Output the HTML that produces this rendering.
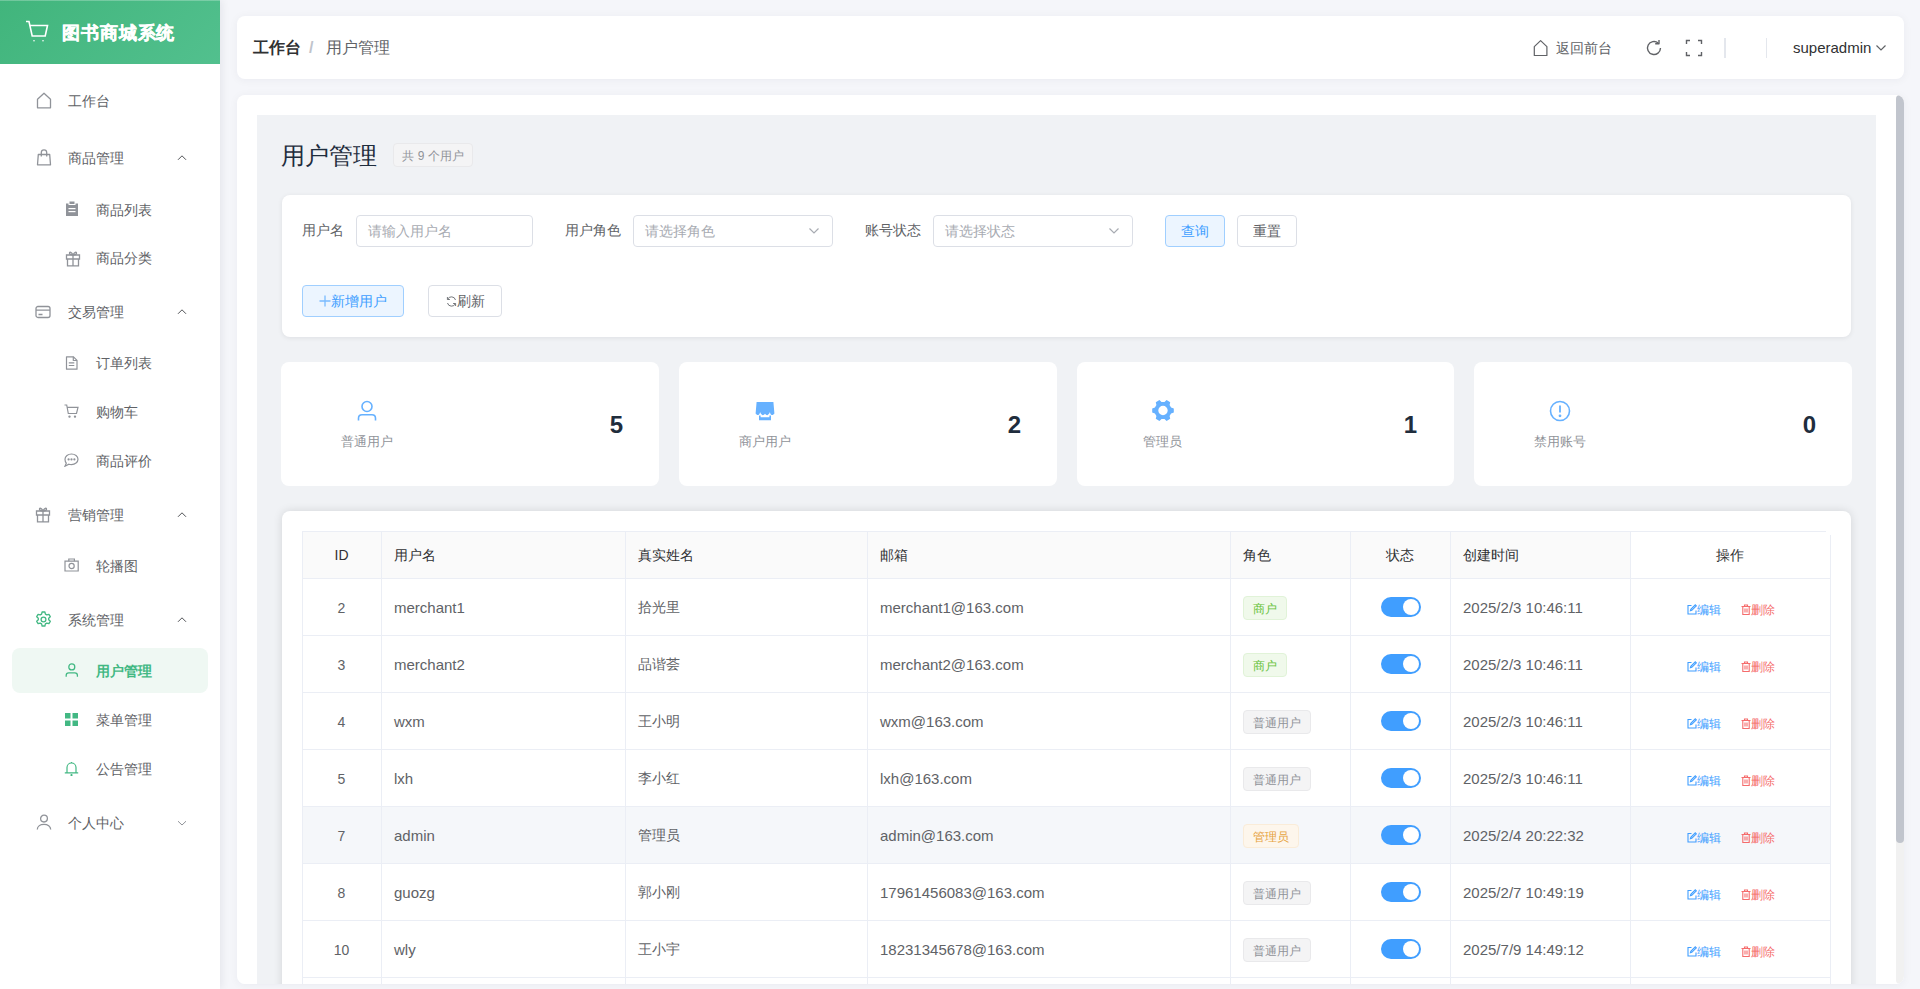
<!DOCTYPE html>
<html><head><meta charset="utf-8">
<style>
*{box-sizing:border-box;margin:0;padding:0}
html,body{width:1920px;height:989px;overflow:hidden}
body{font-family:"Liberation Sans",sans-serif;background:#f5f6fa;position:relative;color:#303133;font-size:14px}
.abs{position:absolute}
#side{position:absolute;left:0;top:0;width:220px;height:989px;background:#fff;box-shadow:2px 0 8px rgba(0,21,41,.07);z-index:2}
#logo{position:absolute;left:0;top:0;width:220px;height:64px;background:linear-gradient(135deg,#41b57c,#52c08e)}
#logo .t{position:absolute;left:62px;top:19.5px;font-size:18px;letter-spacing:.9px;font-weight:bold;color:#fff;line-height:26px;-webkit-text-stroke:.4px #fff}
.mt{font-size:14px;line-height:20px;white-space:nowrap}
#hdr{position:absolute;left:237px;top:16px;width:1667px;height:63px;background:#fff;border-radius:8px;box-shadow:0 1px 10px rgba(0,20,60,.05)}
#layer{position:absolute;left:0;top:0;width:1920px;height:989px;clip-path:inset(95px 16px 5px 237px round 8px)}
.card{position:absolute;background:#fff;border-radius:8px}
.lbl{position:absolute;font-size:14px;line-height:20px;color:#606266;white-space:nowrap}
.inp{position:absolute;height:32px;border:1px solid #dcdfe6;border-radius:4px;background:#fff}
.ph{position:absolute;left:11px;top:5px;font-size:14px;line-height:20px;color:#a8abb2;white-space:nowrap}
.btn{position:absolute;height:32px;border:1px solid #dcdfe6;border-radius:4px;background:#fff;font-size:14px;line-height:30px;text-align:center;color:#606266;white-space:nowrap}
.th{font-size:14px;line-height:20px;color:#303133;font-weight:500;white-space:nowrap}
.td{font-size:14px;line-height:20px;color:#606266;white-space:nowrap}
.td.l{font-size:15px;margin-top:1px}
.tag{height:24px;padding:0 9px;border:1px solid;border-radius:4px;font-size:12px;line-height:24px;white-space:nowrap}
.sw{width:40px;height:20px;border-radius:10px;background:#409eff}
.sw i{position:absolute;right:2px;top:2px;width:16px;height:16px;border-radius:50%;background:#fff}
.op{font-size:12px;line-height:14px;white-space:nowrap}
.op svg{vertical-align:-1px}
.stl{position:absolute;font-size:13px;line-height:18px;color:#909399;white-space:nowrap;width:100px;text-align:center}
.stn{position:absolute;font-size:24px;font-weight:bold;line-height:28px;color:#1f2d3d;text-align:right;width:60px;margin-top:1px}
</style></head><body>
<div id="side">
  <div id="logo"><div class="abs" style="left:0;top:0;width:220px;height:1px;background:rgba(255,255,255,.25)"></div>
    <svg class="abs" style="left:25px;top:20px" width="24" height="23" viewBox="0 0 24 23" fill="none" stroke="#fff" stroke-width="1.6"><path d="M1 1.5h3l3.2 14.5h13l2.3-10.5H5.5"/><circle cx="9" cy="20.8" r=".8" fill="#fff" stroke="none"/><circle cx="18" cy="20.8" r=".8" fill="#fff" stroke="none"/></svg>
    <div class="t">图书商城系统</div>
  </div>
<div class="abs" style="left:12px;top:648px;width:196px;height:45px;border-radius:8px;background:#eff8f3"></div>
<div class="abs" style="left:36px;top:92px"><svg width="16" height="17" viewBox="0 0 16 17" fill="none" stroke="#909399" stroke-width="1.3" stroke-linejoin="round"><path d="M1.5 7.2L8 1.2l6.5 6V15.8H1.5z"/></svg></div>
<div class="abs mt" style="left:68px;top:91px;color:#606266;">工作台</div>
<div class="abs" style="left:36px;top:149px"><svg width="16" height="17" viewBox="0 0 16 17" fill="none" stroke="#909399" stroke-width="1.3" stroke-linejoin="round"><path d="M2.3 5.5h11.4l.8 10.3H1.5z"/><path d="M5.3 7.5V3.6a2.7 2.7 0 0 1 5.4 0V7.5"/></svg></div>
<div class="abs mt" style="left:68px;top:148px;color:#606266;">商品管理</div>
<svg class="abs" style="left:176px;top:154px" width="12" height="8" viewBox="0 0 12 8" fill="none" stroke="#505256" stroke-width="1"><path d="M2 5.8L6 1.8 10 5.8"/></svg>
<div class="abs" style="left:65px;top:201px"><svg width="14" height="15" viewBox="0 0 14 15"><path fill="#909399" d="M1 2.5h2.5V4h7V2.5H13V15H1z"/><rect x="4.5" y="0.5" width="5" height="2.5" fill="#909399"/><rect x="3.5" y="7" width="7" height="1.2" fill="#fff"/><rect x="3.5" y="10" width="7" height="1.2" fill="#fff"/></svg></div>
<div class="abs mt" style="left:96px;top:199.5px;color:#606266;">商品列表</div>
<div class="abs" style="left:65px;top:250px"><svg width="16" height="17" viewBox="0 0 16 17" fill="none" stroke="#909399" stroke-width="1.3"><path d="M1.5 5h13v4h-13zM2.5 9h11v6.8h-11zM8 5v10.8"/><path d="M8 5C6.5 2 4.5 1.5 4.5 3.2S6.5 5 8 5c1.5 0 3.5 0 3.5-1.8S9.5 2 8 5z"/></svg></div>
<div class="abs mt" style="left:96px;top:248px;color:#606266;">商品分类</div>
<div class="abs" style="left:35px;top:305px"><svg width="16" height="14" viewBox="0 0 16 14" fill="none" stroke="#909399" stroke-width="1.3"><rect x="1" y="1.5" width="14" height="11" rx="2"/><path d="M1 5.2h14M3.5 9.5h4"/></svg></div>
<div class="abs mt" style="left:68px;top:302px;color:#606266;">交易管理</div>
<svg class="abs" style="left:176px;top:308px" width="12" height="8" viewBox="0 0 12 8" fill="none" stroke="#505256" stroke-width="1"><path d="M2 5.8L6 1.8 10 5.8"/></svg>
<div class="abs" style="left:65px;top:356px"><svg width="14" height="14" viewBox="0 0 14 14" fill="none" stroke="#909399" stroke-width="1.2" stroke-linejoin="round"><path d="M1.5 0.8h7l3.5 3.5V13.2h-10.5z"/><path d="M8.3 0.8v3.7H12M3.8 6.8h5.5M3.8 9.5h5.5"/></svg></div>
<div class="abs mt" style="left:96px;top:353px;color:#606266;">订单列表</div>
<div class="abs" style="left:64px;top:404px"><svg width="15" height="14" viewBox="0 0 15 14" fill="none" stroke="#909399" stroke-width="1.2"><path d="M0.5 1h2.2l1.6 8.5h8.2l1.5-6.2H3.2"/><circle cx="5.5" cy="12.6" r=".6" fill="#909399"/><circle cx="11" cy="12.6" r=".6" fill="#909399"/></svg></div>
<div class="abs mt" style="left:96px;top:402px;color:#606266;">购物车</div>
<div class="abs" style="left:64px;top:453px"><svg width="15" height="14" viewBox="0 0 15 14" fill="none" stroke="#909399" stroke-width="1.2"><path d="M7.5 1C11 1 14 3.3 14 6.3S11 11.6 7.5 11.6c-.9 0-1.8-.1-2.6-.4L1 13.2l1.3-3C1.5 9.2 1 7.8 1 6.3 1 3.3 4 1 7.5 1z"/><circle cx="4.6" cy="6.4" r=".5" fill="#909399"/><circle cx="7.5" cy="6.4" r=".5" fill="#909399"/><circle cx="10.4" cy="6.4" r=".5" fill="#909399"/></svg></div>
<div class="abs mt" style="left:96px;top:451px;color:#606266;">商品评价</div>
<div class="abs" style="left:35px;top:506px"><svg width="16" height="17" viewBox="0 0 16 17" fill="none" stroke="#909399" stroke-width="1.3"><path d="M1.5 5h13v4h-13zM2.5 9h11v6.8h-11zM8 5v10.8"/><path d="M8 5C6.5 2 4.5 1.5 4.5 3.2S6.5 5 8 5c1.5 0 3.5 0 3.5-1.8S9.5 2 8 5z"/></svg></div>
<div class="abs mt" style="left:68px;top:505px;color:#606266;">营销管理</div>
<svg class="abs" style="left:176px;top:511px" width="12" height="8" viewBox="0 0 12 8" fill="none" stroke="#505256" stroke-width="1"><path d="M2 5.8L6 1.8 10 5.8"/></svg>
<div class="abs" style="left:64px;top:558px"><svg width="15" height="14" viewBox="0 0 15 14" fill="none" stroke="#909399" stroke-width="1.2"><path d="M1 3.2h13.2v9.8H1z"/><path d="M4.8 3.2V1h5.6v2.2"/><circle cx="7.6" cy="8" r="2.6"/></svg></div>
<div class="abs mt" style="left:96px;top:556px;color:#606266;">轮播图</div>
<div class="abs" style="left:35px;top:611px"><svg width="17" height="17" viewBox="0 0 17 17" fill="none" stroke="#42b883" stroke-width="1.3" stroke-linejoin="round"><path d="M7.1 1h2.8l.5 2.1 1.4.8 2.1-.6 1.4 2.4-1.6 1.5v1.6l1.6 1.5-1.4 2.4-2.1-.6-1.4.8-.5 2.1H7.1l-.5-2.1-1.4-.8-2.1.6-1.4-2.4 1.6-1.5V7.2L1.7 5.7l1.4-2.4 2.1.6 1.4-.8z"/><circle cx="8.5" cy="8.5" r="2.4"/></svg></div>
<div class="abs mt" style="left:68px;top:610px;color:#606266;">系统管理</div>
<svg class="abs" style="left:176px;top:616px" width="12" height="8" viewBox="0 0 12 8" fill="none" stroke="#505256" stroke-width="1"><path d="M2 5.8L6 1.8 10 5.8"/></svg>
<div class="abs" style="left:65px;top:663px"><svg width="13.6" height="14.5" viewBox="0 0 15 16" fill="none" stroke="#42b883" stroke-width="1.4"><circle cx="7.5" cy="4.3" r="3.3"/><path d="M1.3 15.2v-1.4c0-1.6 1.2-2.8 2.8-2.8h6.8c1.6 0 2.8 1.2 2.8 2.8v1.4"/></svg></div>
<div class="abs mt" style="left:96px;top:661px;color:#42b883;font-weight:bold;">用户管理</div>
<div class="abs" style="left:65px;top:713px"><svg width="13" height="13" viewBox="0 0 13 13" fill="#42b883"><rect x="0" y="0" width="5.5" height="5.5"/><rect x="7.5" y="0" width="5.5" height="5.5"/><rect x="0" y="7.5" width="5.5" height="5.5"/><rect x="7.5" y="7.5" width="5.5" height="5.5"/></svg></div>
<div class="abs mt" style="left:96px;top:710px;color:#606266;">菜单管理</div>
<div class="abs" style="left:64px;top:761px"><svg width="15" height="15" viewBox="0 0 15 15" fill="none" stroke="#42b883" stroke-width="1.2"><path d="M3 11.5V6.5a4.5 4.5 0 0 1 9 0v5M0.8 11.8h13.4"/><path d="M7.5 1v1"/><circle cx="7.5" cy="14" r=".5" fill="#42b883"/></svg></div>
<div class="abs mt" style="left:96px;top:759px;color:#606266;">公告管理</div>
<div class="abs" style="left:36px;top:814px"><svg width="16" height="16" viewBox="0 0 16 16" fill="none" stroke="#909399" stroke-width="1.3"><circle cx="8" cy="4.6" r="3.4"/><path d="M1.3 15.5c0-3.3 3-5.2 6.7-5.2s6.7 1.9 6.7 5.2"/></svg></div>
<div class="abs mt" style="left:68px;top:813px;color:#606266;">个人中心</div>
<svg class="abs" style="left:176px;top:819px" width="12" height="8" viewBox="0 0 12 8" fill="none" stroke="#909399" stroke-width="1"><path d="M2 2.2L6 6 10 2.2"/></svg>
</div>
<div id="hdr">
  <div class="abs" style="left:16px;top:22px;font-size:16px;font-weight:bold;color:#303133;line-height:20px">工作台</div>
  <div class="abs" style="left:72px;top:22px;font-size:16px;font-weight:bold;color:#c0c4cc;line-height:20px">/</div>
  <div class="abs" style="left:89px;top:22px;font-size:16px;color:#606266;line-height:20px">用户管理</div>
  <svg class="abs" style="left:1295px;top:23px" width="17" height="18" viewBox="0 0 17 18" fill="none" stroke="#606266" stroke-width="1.2" stroke-linejoin="round"><path d="M2.3 7.6L8.6 1.6l6.3 6V16.5H2.3z"/></svg>
  <div class="abs" style="left:1319px;top:22px;font-size:14px;line-height:20px;color:#606266">返回前台</div>
  <svg class="abs" style="left:1408px;top:23px" width="18" height="18" viewBox="0 0 18 18" fill="none" stroke="#606266" stroke-width="1.4"><path d="M15.5 9A6.5 6.5 0 1 1 13.2 4"/><path d="M14 1v3.8h-3.8" stroke-linejoin="round"/></svg>
  <svg class="abs" style="left:1448px;top:23px" width="18" height="18" viewBox="0 0 18 18" fill="none" stroke="#606266" stroke-width="1.4"><path d="M1.5 5V1.5H5M13 1.5h3.5V5M16.5 13v3.5H13M5 16.5H1.5V13"/></svg>
  <div class="abs" style="left:1487px;top:22px;width:2px;height:20px;background:#e4e7ed"></div>
  <div class="abs" style="left:1529px;top:22px;width:1px;height:20px;background:#e4e7ed"></div>
  <div class="abs" style="left:1556px;top:22px;font-size:15px;line-height:20px;color:#303133">superadmin</div>
  <svg class="abs" style="left:1638px;top:28px" width="12" height="8" viewBox="0 0 12 8" fill="none" stroke="#606266" stroke-width="1.2"><path d="M1.5 1.5L6 6l4.5-4.5"/></svg>
</div>
<div class="abs" style="left:237px;top:95px;width:1667px;height:889px;border-radius:8px;box-shadow:0 1px 10px rgba(0,20,60,.05)"></div>
<div id="layer">
  <div class="abs" style="left:237px;top:95px;width:1667px;height:894px;background:#fff"></div>
  <div class="abs" style="left:257px;top:115px;width:1619px;height:880px;background:#f0f2f5"></div>
  <div class="abs" style="left:1896px;top:95px;width:8px;height:889px;background:#f1f1f1;border-radius:4px"></div>
  <div class="abs" style="left:1896px;top:95px;width:8px;height:748px;background:#c1c5cd;border-radius:4px"></div>
  <div class="abs" style="left:281px;top:138px;font-size:24px;line-height:36px;color:#1f2d3d">用户管理</div>
  <div class="abs" style="left:393px;top:143px;width:80px;height:24px;border:1px solid #e9e9eb;background:#f4f4f5;border-radius:4px;font-size:12px;line-height:25px;color:#909399;text-align:center">共 9 个用户</div>
  <div class="card" style="left:282px;top:195px;width:1569px;height:142px;box-shadow:0 1px 5px rgba(0,10,30,.08)">
    <div class="lbl" style="left:20px;top:25px">用户名</div>
    <div class="inp" style="left:74px;top:20px;width:177px"><div class="ph">请输入用户名</div></div>
    <div class="lbl" style="left:283px;top:25px">用户角色</div>
    <div class="inp" style="left:351px;top:20px;width:200px"><div class="ph">请选择角色</div>
      <svg class="abs" style="left:174px;top:11px" width="12" height="8" viewBox="0 0 12 8" fill="none" stroke="#a8abb2" stroke-width="1.2"><path d="M1.5 1.5L6 6l4.5-4.5"/></svg></div>
    <div class="lbl" style="left:583px;top:25px">账号状态</div>
    <div class="inp" style="left:651px;top:20px;width:200px"><div class="ph">请选择状态</div>
      <svg class="abs" style="left:174px;top:11px" width="12" height="8" viewBox="0 0 12 8" fill="none" stroke="#a8abb2" stroke-width="1.2"><path d="M1.5 1.5L6 6l4.5-4.5"/></svg></div>
    <div class="btn" style="left:883px;top:20px;width:60px;background:#ecf5ff;border-color:#a0cfff;color:#409eff">查询</div>
    <div class="btn" style="left:955px;top:20px;width:60px">重置</div>
    <div class="btn" style="left:20px;top:90px;width:102px;background:#ecf5ff;border-color:#a0cfff;color:#409eff">
      <svg style="vertical-align:-1px" width="12" height="12" viewBox="0 0 12 12" stroke="#79bbff" stroke-width="1.3"><path d="M6 0.5v11M0.5 6h11"/></svg>新增用户</div>
    <div class="btn" style="left:146px;top:90px;width:74px">
      <svg style="vertical-align:-1px" width="11" height="11" viewBox="0 0 11 11" fill="none" stroke="#73767a" stroke-width="1"><path d="M9.5 4A4.2 4.2 0 0 0 1.6 3.3M1.5 7a4.2 4.2 0 0 0 7.9.7"/><path d="M1.4 1v2.5h2.5M9.6 10V7.5H7.1"/></svg>刷新</div>
  </div>
  <div class="card" style="left:281px;top:362px;width:378px;height:124px"></div>
  <div class="card" style="left:679px;top:362px;width:378px;height:124px"></div>
  <div class="card" style="left:1077px;top:362px;width:377px;height:124px"></div>
  <div class="card" style="left:1474px;top:362px;width:378px;height:124px"></div>
  <svg class="abs" style="left:357px;top:400px" width="20" height="22" viewBox="0 0 20 22" fill="none" stroke="#66b1ff" stroke-width="1.6"><circle cx="10" cy="6.5" r="5"/><path d="M1.5 20.5v-2.2c0-2 1.5-3.5 3.5-3.5h10c2 0 3.5 1.5 3.5 3.5v2.2"/></svg>
  <div class="stl" style="left:316.5px;top:433px">普通用户</div>
  <div class="stn" style="left:563px;top:410px">5</div>
  <svg class="abs" style="left:755px;top:401px" width="20" height="20" viewBox="0 0 20 20" fill="#66b1ff"><path d="M1.6 0.9h16.8l1 11.6c-.4.9-1.4 1.5-2.6 1.6-.9-.3-1.5-1-1.9-3-.5 1.8-1.6 2.8-2.7 3.1-.9-.2-1.6-.8-2.2-1.5-.6.7-1.3 1.3-2.2 1.5-1.1-.3-2.2-1.3-2.7-3.1-.4 2-1 2.7-1.9 3-1.2-.1-2.2-.7-2.6-1.6z"/><path d="M4 14.4h1.6v1.8h8.8v-1.8H16v4.9H4z"/></svg>
  <div class="stl" style="left:714.5px;top:433px">商户用户</div>
  <div class="stn" style="left:961px;top:410px">2</div>
  <svg class="abs" style="left:1152px;top:400px" width="22" height="21" viewBox="0 0 22 21" fill="#66b1ff"><path fill-rule="evenodd" d="M19.08 7.56 L21.80 8.40 L21.80 12.60 L19.08 13.44 L17.59 16.03 L18.22 18.80 L14.58 20.90 L12.49 18.97 L9.51 18.97 L7.42 20.90 L3.78 18.80 L4.41 16.03 L2.92 13.44 L0.20 12.60 L0.20 8.40 L2.92 7.56 L4.41 4.97 L3.78 2.20 L7.42 0.10 L9.51 2.03 L12.49 2.03 L14.58 0.10 L18.22 2.20 L17.59 4.97ZM15.7 10.5a4.7 4.7 0 1 0 -9.4 0a4.7 4.7 0 1 0 9.4 0z"/></svg>
  <div class="stl" style="left:1112.5px;top:433px">管理员</div>
  <div class="stn" style="left:1357px;top:410px">1</div>
  <svg class="abs" style="left:1549px;top:400px" width="22" height="22" viewBox="0 0 22 22" fill="none" stroke="#66b1ff" stroke-width="1.6"><circle cx="11" cy="11" r="9.5"/><path d="M11 5.5v7" stroke-width="1.8"/><circle cx="11" cy="15.8" r=".6" fill="#66b1ff"/></svg>
  <div class="stl" style="left:1510px;top:433px">禁用账号</div>
  <div class="stn" style="left:1756px;top:410px">0</div>
  <div class="card" style="left:282px;top:511px;width:1569px;height:600px;box-shadow:0 0 10px rgba(0,0,0,.12)"></div>
<div class="abs" style="left:302px;top:531px;width:1528px;height:47px;background:#fafafa"></div>
<div class="abs" style="left:1630px;top:531px;width:200px;height:47px;background:#fff"></div>
<div class="abs" style="left:302px;top:806px;width:1528px;height:57px;background:#f5f7fa"></div>
<div class="abs" style="left:302px;top:531px;width:1524px;height:1px;background:#ebeef5"></div>
<div class="abs" style="left:302px;top:578px;width:1528px;height:1px;background:#ebeef5"></div>
<div class="abs" style="left:302px;top:635px;width:1528px;height:1px;background:#ebeef5"></div>
<div class="abs" style="left:302px;top:692px;width:1528px;height:1px;background:#ebeef5"></div>
<div class="abs" style="left:302px;top:749px;width:1528px;height:1px;background:#ebeef5"></div>
<div class="abs" style="left:302px;top:806px;width:1528px;height:1px;background:#ebeef5"></div>
<div class="abs" style="left:302px;top:863px;width:1528px;height:1px;background:#ebeef5"></div>
<div class="abs" style="left:302px;top:920px;width:1528px;height:1px;background:#ebeef5"></div>
<div class="abs" style="left:302px;top:977px;width:1528px;height:1px;background:#ebeef5"></div>
<div class="abs" style="left:302px;top:1034px;width:1528px;height:1px;background:#ebeef5"></div>
<div class="abs" style="left:302px;top:531px;width:1px;height:458px;background:#ebeef5"></div>
<div class="abs" style="left:381px;top:531px;width:1px;height:458px;background:#ebeef5"></div>
<div class="abs" style="left:625px;top:531px;width:1px;height:458px;background:#ebeef5"></div>
<div class="abs" style="left:867px;top:531px;width:1px;height:458px;background:#ebeef5"></div>
<div class="abs" style="left:1230px;top:531px;width:1px;height:458px;background:#ebeef5"></div>
<div class="abs" style="left:1350px;top:531px;width:1px;height:458px;background:#ebeef5"></div>
<div class="abs" style="left:1450px;top:531px;width:1px;height:458px;background:#ebeef5"></div>
<div class="abs" style="left:1630px;top:531px;width:1px;height:458px;background:#ebeef5"></div>
<div class="abs" style="left:1830px;top:535px;width:1px;height:454px;background:#ebeef5"></div>
<div class="abs th" style="left:291.5px;width:100px;text-align:center;top:544.5px">ID</div>
<div class="abs th" style="left:394px;top:544.5px">用户名</div>
<div class="abs th" style="left:638px;top:544.5px">真实姓名</div>
<div class="abs th" style="left:880px;top:544.5px">邮箱</div>
<div class="abs th" style="left:1243px;top:544.5px">角色</div>
<div class="abs th" style="left:1350px;width:100px;text-align:center;top:544.5px">状态</div>
<div class="abs th" style="left:1463px;top:544.5px">创建时间</div>
<div class="abs th" style="left:1680px;width:100px;text-align:center;top:544.5px">操作</div>
<div class="abs td" style="left:291.5px;width:100px;text-align:center;top:598.0px">2</div>
<div class="abs td l" style="left:394px;top:596.5px">merchant1</div>
<div class="abs td" style="left:638px;top:596.5px">拾光里</div>
<div class="abs td l" style="left:880px;top:596.5px">merchant1@163.com</div>
<div class="abs tag" style="left:1243px;top:596.0px;background:#f0f9eb;border-color:#e1f3d8;color:#67c23a">商户</div>
<div class="abs sw" style="left:1381px;top:597.0px"><i></i></div>
<div class="abs td l" style="left:1463px;top:596.5px">2025/2/3 10:46:11</div>
<div class="abs op" style="left:1687px;top:602.5px;color:#409eff"><svg width="10" height="11" viewBox="0 0 10 11" fill="none" stroke="#409eff" stroke-width="1.1"><path d="M4.5 1.5H1v8.5h8V6.5"/><path d="M8.3 0.8l1 1-4.5 4.5-1.4.4.4-1.4z"/></svg>编辑</div>
<div class="abs op" style="left:1741px;top:602.5px;color:#f56c6c"><svg width="10" height="11" viewBox="0 0 10 11" fill="none" stroke="#f56c6c" stroke-width="1.1"><path d="M0.5 2.5h9M3.5 2.5V1h3v1.5M1.8 2.5v8h6.4v-8M4 4.5v4M6 4.5v4"/></svg>删除</div>
<div class="abs td" style="left:291.5px;width:100px;text-align:center;top:655.0px">3</div>
<div class="abs td l" style="left:394px;top:653.5px">merchant2</div>
<div class="abs td" style="left:638px;top:653.5px">品谐荟</div>
<div class="abs td l" style="left:880px;top:653.5px">merchant2@163.com</div>
<div class="abs tag" style="left:1243px;top:653.0px;background:#f0f9eb;border-color:#e1f3d8;color:#67c23a">商户</div>
<div class="abs sw" style="left:1381px;top:654.0px"><i></i></div>
<div class="abs td l" style="left:1463px;top:653.5px">2025/2/3 10:46:11</div>
<div class="abs op" style="left:1687px;top:659.5px;color:#409eff"><svg width="10" height="11" viewBox="0 0 10 11" fill="none" stroke="#409eff" stroke-width="1.1"><path d="M4.5 1.5H1v8.5h8V6.5"/><path d="M8.3 0.8l1 1-4.5 4.5-1.4.4.4-1.4z"/></svg>编辑</div>
<div class="abs op" style="left:1741px;top:659.5px;color:#f56c6c"><svg width="10" height="11" viewBox="0 0 10 11" fill="none" stroke="#f56c6c" stroke-width="1.1"><path d="M0.5 2.5h9M3.5 2.5V1h3v1.5M1.8 2.5v8h6.4v-8M4 4.5v4M6 4.5v4"/></svg>删除</div>
<div class="abs td" style="left:291.5px;width:100px;text-align:center;top:712.0px">4</div>
<div class="abs td l" style="left:394px;top:710.5px">wxm</div>
<div class="abs td" style="left:638px;top:710.5px">王小明</div>
<div class="abs td l" style="left:880px;top:710.5px">wxm@163.com</div>
<div class="abs tag" style="left:1243px;top:710.0px;background:#f4f4f5;border-color:#e9e9eb;color:#909399">普通用户</div>
<div class="abs sw" style="left:1381px;top:711.0px"><i></i></div>
<div class="abs td l" style="left:1463px;top:710.5px">2025/2/3 10:46:11</div>
<div class="abs op" style="left:1687px;top:716.5px;color:#409eff"><svg width="10" height="11" viewBox="0 0 10 11" fill="none" stroke="#409eff" stroke-width="1.1"><path d="M4.5 1.5H1v8.5h8V6.5"/><path d="M8.3 0.8l1 1-4.5 4.5-1.4.4.4-1.4z"/></svg>编辑</div>
<div class="abs op" style="left:1741px;top:716.5px;color:#f56c6c"><svg width="10" height="11" viewBox="0 0 10 11" fill="none" stroke="#f56c6c" stroke-width="1.1"><path d="M0.5 2.5h9M3.5 2.5V1h3v1.5M1.8 2.5v8h6.4v-8M4 4.5v4M6 4.5v4"/></svg>删除</div>
<div class="abs td" style="left:291.5px;width:100px;text-align:center;top:769.0px">5</div>
<div class="abs td l" style="left:394px;top:767.5px">lxh</div>
<div class="abs td" style="left:638px;top:767.5px">李小红</div>
<div class="abs td l" style="left:880px;top:767.5px">lxh@163.com</div>
<div class="abs tag" style="left:1243px;top:767.0px;background:#f4f4f5;border-color:#e9e9eb;color:#909399">普通用户</div>
<div class="abs sw" style="left:1381px;top:768.0px"><i></i></div>
<div class="abs td l" style="left:1463px;top:767.5px">2025/2/3 10:46:11</div>
<div class="abs op" style="left:1687px;top:773.5px;color:#409eff"><svg width="10" height="11" viewBox="0 0 10 11" fill="none" stroke="#409eff" stroke-width="1.1"><path d="M4.5 1.5H1v8.5h8V6.5"/><path d="M8.3 0.8l1 1-4.5 4.5-1.4.4.4-1.4z"/></svg>编辑</div>
<div class="abs op" style="left:1741px;top:773.5px;color:#f56c6c"><svg width="10" height="11" viewBox="0 0 10 11" fill="none" stroke="#f56c6c" stroke-width="1.1"><path d="M0.5 2.5h9M3.5 2.5V1h3v1.5M1.8 2.5v8h6.4v-8M4 4.5v4M6 4.5v4"/></svg>删除</div>
<div class="abs td" style="left:291.5px;width:100px;text-align:center;top:826.0px">7</div>
<div class="abs td l" style="left:394px;top:824.5px">admin</div>
<div class="abs td" style="left:638px;top:824.5px">管理员</div>
<div class="abs td l" style="left:880px;top:824.5px">admin@163.com</div>
<div class="abs tag" style="left:1243px;top:824.0px;background:#fdf6ec;border-color:#faecd8;color:#e6a23c">管理员</div>
<div class="abs sw" style="left:1381px;top:825.0px"><i></i></div>
<div class="abs td l" style="left:1463px;top:824.5px">2025/2/4 20:22:32</div>
<div class="abs op" style="left:1687px;top:830.5px;color:#409eff"><svg width="10" height="11" viewBox="0 0 10 11" fill="none" stroke="#409eff" stroke-width="1.1"><path d="M4.5 1.5H1v8.5h8V6.5"/><path d="M8.3 0.8l1 1-4.5 4.5-1.4.4.4-1.4z"/></svg>编辑</div>
<div class="abs op" style="left:1741px;top:830.5px;color:#f56c6c"><svg width="10" height="11" viewBox="0 0 10 11" fill="none" stroke="#f56c6c" stroke-width="1.1"><path d="M0.5 2.5h9M3.5 2.5V1h3v1.5M1.8 2.5v8h6.4v-8M4 4.5v4M6 4.5v4"/></svg>删除</div>
<div class="abs td" style="left:291.5px;width:100px;text-align:center;top:883.0px">8</div>
<div class="abs td l" style="left:394px;top:881.5px">guozg</div>
<div class="abs td" style="left:638px;top:881.5px">郭小刚</div>
<div class="abs td l" style="left:880px;top:881.5px">17961456083@163.com</div>
<div class="abs tag" style="left:1243px;top:881.0px;background:#f4f4f5;border-color:#e9e9eb;color:#909399">普通用户</div>
<div class="abs sw" style="left:1381px;top:882.0px"><i></i></div>
<div class="abs td l" style="left:1463px;top:881.5px">2025/2/7 10:49:19</div>
<div class="abs op" style="left:1687px;top:887.5px;color:#409eff"><svg width="10" height="11" viewBox="0 0 10 11" fill="none" stroke="#409eff" stroke-width="1.1"><path d="M4.5 1.5H1v8.5h8V6.5"/><path d="M8.3 0.8l1 1-4.5 4.5-1.4.4.4-1.4z"/></svg>编辑</div>
<div class="abs op" style="left:1741px;top:887.5px;color:#f56c6c"><svg width="10" height="11" viewBox="0 0 10 11" fill="none" stroke="#f56c6c" stroke-width="1.1"><path d="M0.5 2.5h9M3.5 2.5V1h3v1.5M1.8 2.5v8h6.4v-8M4 4.5v4M6 4.5v4"/></svg>删除</div>
<div class="abs td" style="left:291.5px;width:100px;text-align:center;top:940.0px">10</div>
<div class="abs td l" style="left:394px;top:938.5px">wly</div>
<div class="abs td" style="left:638px;top:938.5px">王小宇</div>
<div class="abs td l" style="left:880px;top:938.5px">18231345678@163.com</div>
<div class="abs tag" style="left:1243px;top:938.0px;background:#f4f4f5;border-color:#e9e9eb;color:#909399">普通用户</div>
<div class="abs sw" style="left:1381px;top:939.0px"><i></i></div>
<div class="abs td l" style="left:1463px;top:938.5px">2025/7/9 14:49:12</div>
<div class="abs op" style="left:1687px;top:944.5px;color:#409eff"><svg width="10" height="11" viewBox="0 0 10 11" fill="none" stroke="#409eff" stroke-width="1.1"><path d="M4.5 1.5H1v8.5h8V6.5"/><path d="M8.3 0.8l1 1-4.5 4.5-1.4.4.4-1.4z"/></svg>编辑</div>
<div class="abs op" style="left:1741px;top:944.5px;color:#f56c6c"><svg width="10" height="11" viewBox="0 0 10 11" fill="none" stroke="#f56c6c" stroke-width="1.1"><path d="M0.5 2.5h9M3.5 2.5V1h3v1.5M1.8 2.5v8h6.4v-8M4 4.5v4M6 4.5v4"/></svg>删除</div>
</div>
</body></html>
